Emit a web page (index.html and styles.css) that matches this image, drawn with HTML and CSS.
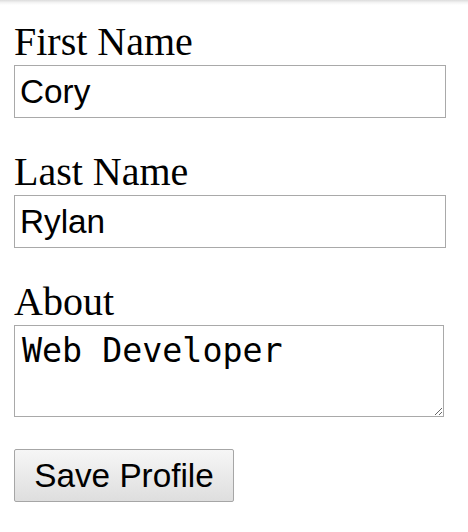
FILE: index.html
```html
<!DOCTYPE html>
<html>
<head>
<meta charset="utf-8">
<link rel="stylesheet" href="styles.css">
</head>
<body>
<div class="topshadow"></div>
<form class="profile">
  <div class="field">
    <label class="label" for="first">First Name</label>
    <input class="input" id="first" type="text" value="Cory">
  </div>
  <div class="field">
    <label class="label" for="last">Last Name</label>
    <input class="input" id="last" type="text" value="Rylan">
  </div>
  <div class="field field-about">
    <label class="label" for="about">About</label>
    <textarea class="textarea" id="about">Web Developer</textarea>
  </div>
  <div class="actions">
    <button class="button" type="button">Save Profile</button>
  </div>
</form>
</body>
</html>
```
FILE: styles.css
```css
html, body {
  margin: 0;
  padding: 0;
  background: #ffffff;
}
body {
  width: 468px;
  height: 532px;
  overflow: hidden;
}
.topshadow {
  height: 5px;
  background: linear-gradient(to bottom, #dcdcdc 0%, #f3f3f3 50%, #ffffff 100%);
}
.profile {
  display: flex;
  flex-direction: column;
  padding: 14px 0 0 14px;
}
.field {
  display: flex;
  flex-direction: column;
  align-items: flex-start;
  margin-bottom: 31px;
}
.field-about {
  margin-bottom: 32px;
}
.label {
  font-family: "Liberation Serif", "Times New Roman", serif;
  font-size: 40px;
  line-height: 46px;
  height: 46px;
  color: #000;
}
.input {
  box-sizing: border-box;
  width: 432px;
  height: 53px;
  margin: 0;
  border: 1px solid #a9a9a9;
  border-radius: 0;
  padding: 0 5px;
  font-family: "Liberation Sans", Arial, sans-serif;
  font-size: 33.3px;
  color: #000;
  background: #fff;
  outline: none;
}
.textarea {
  box-sizing: border-box;
  width: 430px;
  height: 92px;
  margin: 0;
  border: 1px solid #a9a9a9;
  border-radius: 0;
  padding: 5px 7px;
  font-family: "DejaVu Sans Mono", monospace;
  font-size: 33.3px;
  line-height: normal;
  color: #000;
  background: #fff;
  outline: none;
  resize: both;
}
.actions {
  display: flex;
}
.button {
  box-sizing: border-box;
  width: 220px;
  height: 53px;
  margin: 0;
  padding: 0 15px;
  border: 1px solid #a6a6a6;
  border-radius: 2px;
  font-family: "Liberation Sans", Arial, sans-serif;
  font-size: 33.3px;
  color: #000;
  background: linear-gradient(to bottom, #f6f6f6 0%, #e9e9e9 55%, #dedede 100%);
}
```
